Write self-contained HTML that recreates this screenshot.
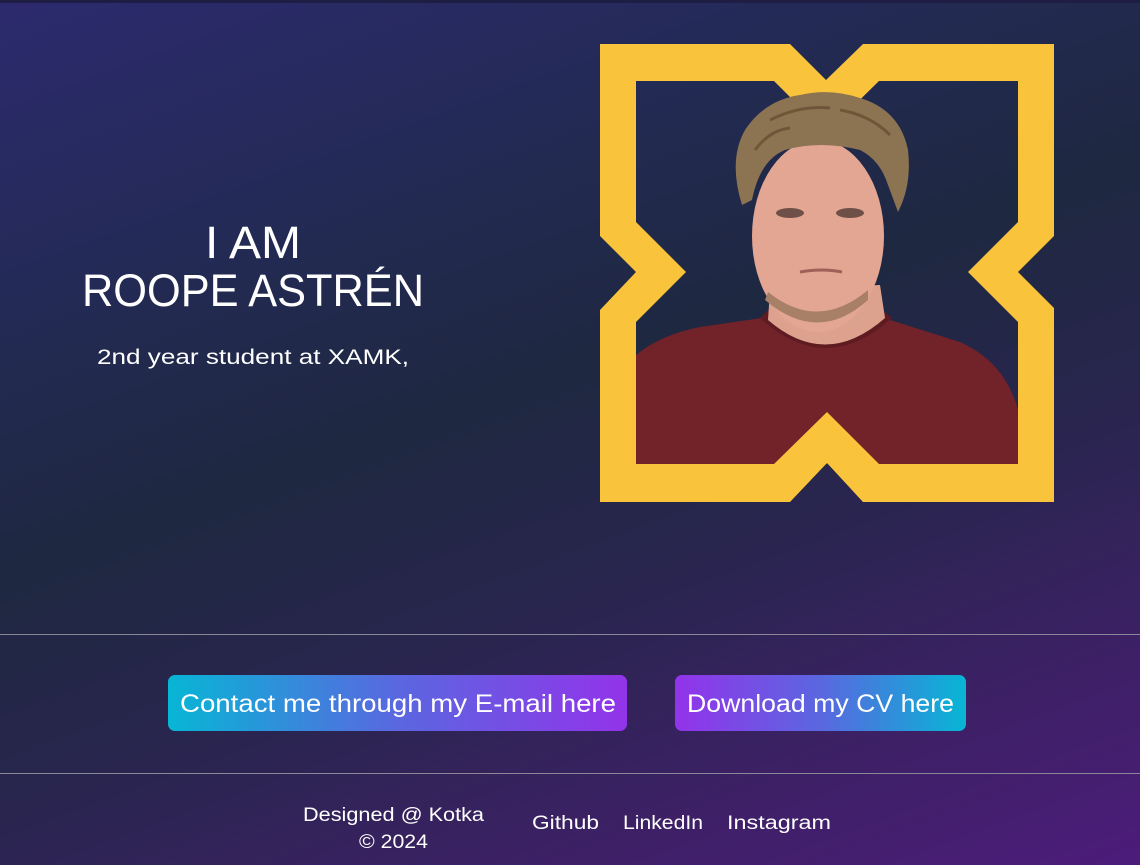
<!DOCTYPE html>
<html><head><meta charset="utf-8"><style>
html,body{margin:0;padding:0;width:1140px;height:865px;overflow:hidden}
body{background:linear-gradient(160deg,#2c2a6e 0%,#232a55 25%,#1e2840 45%,#2a2550 65%,#3f2068 85%,#4c1c7a 100%);font-family:"Liberation Sans",sans-serif;position:relative}
.top{position:absolute;left:0;top:0;width:1140px;height:3px;background:#1e1d44}
.line{position:absolute;left:0;width:1140px;height:1px;background:#8a8798}
.btn{position:absolute;border-radius:7px}
svg{position:absolute;left:0;top:0}
</style></head><body>
<div class="top"></div>
<div class="line" style="top:634px"></div>
<div class="line" style="top:773px"></div>
<div class="btn" style="left:168px;top:675px;width:459px;height:56px;background:linear-gradient(90deg,#07b6d5,#5a67e0,#9333ea)"></div>
<div class="btn" style="left:675px;top:675px;width:291px;height:56px;background:linear-gradient(90deg,#9333ea,#5a67e0,#07b6d5)"></div>
<svg width="1140" height="865" viewBox="0 0 1140 865">
<defs><clipPath id="c"><rect x="636" y="60" width="382" height="404"/></clipPath></defs>
<g clip-path="url(#c)">
<path d="M636,355 Q660,335 700,327 L762,318 Q826,350 890,320 L960,342 Q1005,362 1018,410 L1018,464 L636,464 Z" fill="#722229"/>
<path d="M760,318 Q826,378 892,318 L882,310 Q826,350 768,310 Z" fill="#5e1b21"/>
<path d="M770,290 L768,320 Q826,370 885,318 L880,285 Z" fill="#dda28e"/>
<ellipse cx="818" cy="236" rx="66" ry="96" fill="#e3a692"/>
<path d="M765,300 Q818,345 868,300 L868,290 Q818,332 768,292Z" fill="#a88068"/>
<ellipse cx="790" cy="213" rx="14" ry="5" fill="#6f5048"/><ellipse cx="850" cy="213" rx="14" ry="5" fill="#6f5048"/>
<path d="M800,272 Q822,268 842,272" stroke="#a0605a" stroke-width="3" fill="none"/>
</g>
<path fill-rule="evenodd" fill="#f9c33c" d="M600,44 L790,44 L826,80 L863,44 L1054,44 L1054,236 L1018,272 L1054,308 L1054,502 L863,502 L827,463 L790,502 L600,502 L600,310 L636,272 L600,236 Z M636,81 L774,81 L826,133 L879,81 L1018,81 L1018,222 L968,272 L1018,322 L1018,464 L879,464 L827,412 L774,464 L636,464 L636,322 L686,272 L636,222 Z"/>
<path d="M742,205 Q728,160 745,130 Q765,100 800,95 Q830,88 860,98 Q900,110 908,150 Q912,185 898,212 L888,185 Q880,160 860,150 Q820,140 785,150 Q760,160 752,200 Z" fill="#8c7352"/>
<path d="M770,120 Q800,105 830,108 M840,110 Q870,115 890,135 M755,150 Q770,130 790,128" stroke="#6e5738" stroke-width="3" fill="none"/>
<g fill="#fff" font-family="Liberation Sans, sans-serif">
<text x="253" y="258" font-size="45" text-anchor="middle" textLength="96" lengthAdjust="spacingAndGlyphs">I AM</text>
<text x="253" y="306" font-size="45" text-anchor="middle" textLength="342" lengthAdjust="spacingAndGlyphs">ROOPE ASTRÉN</text>
<text x="253" y="364" font-size="21" text-anchor="middle" textLength="312" lengthAdjust="spacingAndGlyphs">2nd year student at XAMK,</text>
<text x="180" y="712" font-size="25" textLength="436" lengthAdjust="spacingAndGlyphs">Contact me through my E-mail here</text>
<text x="687" y="712" font-size="25" textLength="267" lengthAdjust="spacingAndGlyphs">Download my CV here</text>
<text x="303" y="821" font-size="19" textLength="181" lengthAdjust="spacingAndGlyphs">Designed @ Kotka</text>
<text x="359" y="848" font-size="19" textLength="69" lengthAdjust="spacingAndGlyphs">© 2024</text>
<text x="532" y="829" font-size="19" textLength="67" lengthAdjust="spacingAndGlyphs">Github</text>
<text x="623" y="829" font-size="19" textLength="80" lengthAdjust="spacingAndGlyphs">LinkedIn</text>
<text x="727" y="829" font-size="19" textLength="104" lengthAdjust="spacingAndGlyphs">Instagram</text>
</g>
</svg>
</body></html>
